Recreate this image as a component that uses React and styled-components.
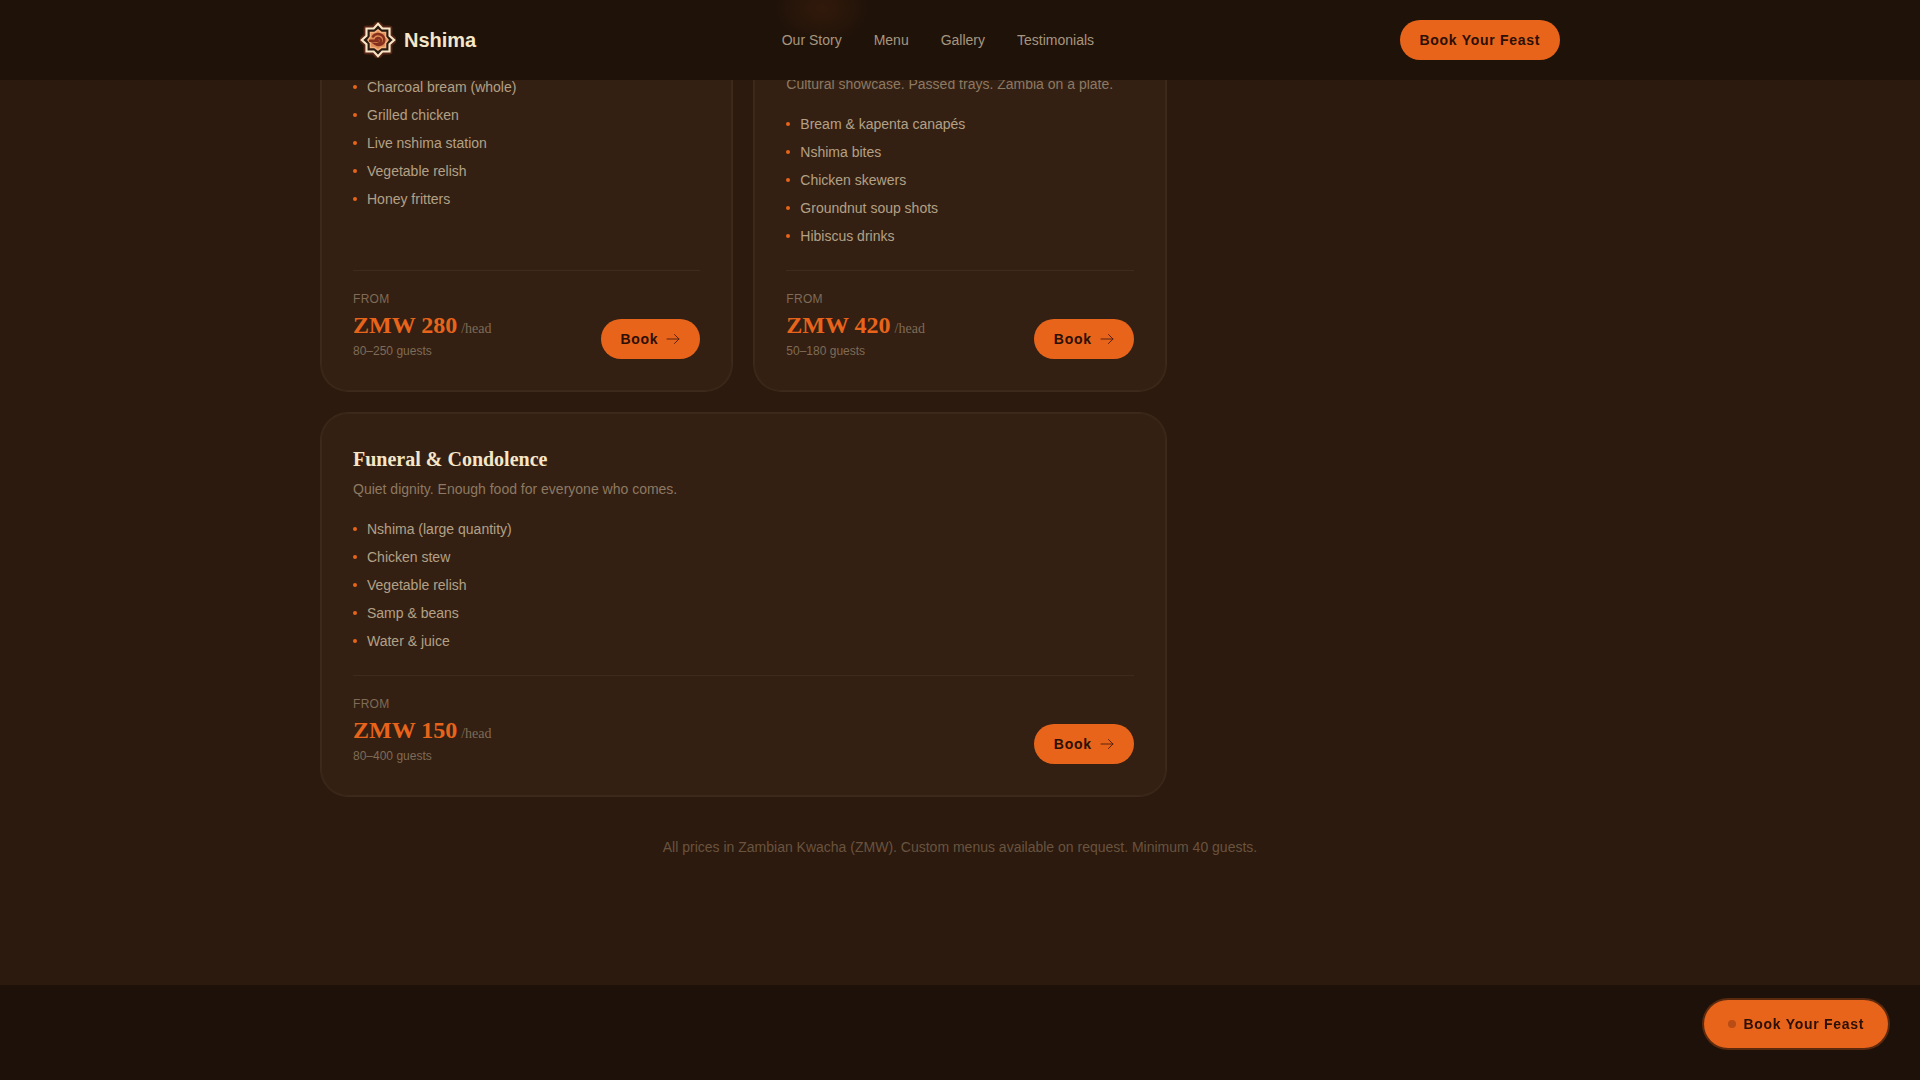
import React from 'react';
import styled, { createGlobalStyle } from 'styled-components';

const NAV_LINKS = [
  { title: 'Our Story', link: '#story' },
  { title: 'Menu', link: '#menu' },
  { title: 'Gallery', link: '#gallery' },
  { title: 'Testimonials', link: '#testimonials' },
];

const PACKAGES = [
  {
    id: 'grill',
    lead: 77,
    items: [
      'Charcoal bream (whole)',
      'Grilled chicken',
      'Live nshima station',
      'Vegetable relish',
      'Honey fritters',
    ],
    price: 'ZMW 280',
    guests: '80–250 guests',
  },
  {
    id: 'showcase',
    lead: 74,
    tagline: 'Cultural showcase. Passed trays. Zambia on a plate.',
    items: [
      'Bream & kapenta canapés',
      'Nshima bites',
      'Chicken skewers',
      'Groundnut soup shots',
      'Hibiscus drinks',
    ],
    price: 'ZMW 420',
    guests: '50–180 guests',
  },
  {
    id: 'funeral',
    wide: true,
    title: 'Funeral & Condolence',
    tagline: 'Quiet dignity. Enough food for everyone who comes.',
    items: [
      'Nshima (large quantity)',
      'Chicken stew',
      'Vegetable relish',
      'Samp & beans',
      'Water & juice',
    ],
    price: 'ZMW 150',
    guests: '80–400 guests',
  },
];

const GlobalStyle = createGlobalStyle`
  *, *::before, *::after {
    box-sizing: border-box;
  }

  body {
    margin: 0;
    background: #1d1109;
    color: #f5e6c8;
    font-family: 'Liberation Sans', Arial, sans-serif;
    font-size: 14px;
    line-height: 20px;
  }
`;

const Page = styled.div`
  display: flex;
  flex-direction: column;
  min-height: 100vh;
`;

const Header = styled.header`
  position: fixed;
  top: 0;
  left: 0;
  right: 0;
  z-index: 10;
  background:
    radial-gradient(ellipse 48px 36px at calc(50% - 138px) 8px, #31190b, #2b170a 40%, transparent),
    #1f1209;
`;

const HeaderInner = styled.div`
  display: flex;
  align-items: center;
  justify-content: space-between;
  max-width: 1280px;
  height: 80px;
  margin: 0 auto;
  padding: 0 40px;
`;

const Brand = styled.a`
  display: flex;
  align-items: center;
  gap: 8px;
  color: #f5e6c8;
  font-size: 20px;
  font-weight: 700;
  line-height: 28px;
  text-decoration: none;
`;

const Nav = styled.nav`
  display: flex;
  gap: 32px;
`;

const NavLink = styled.a`
  color: #a7967f;
  text-decoration: none;
`;

const Button = styled.button`
  display: inline-flex;
  align-items: center;
  gap: 8px;
  height: 40px;
  padding: 0 20px;
  border: 0;
  border-radius: 24px;
  background: #e8641b;
  color: #2c0f05;
  font-family: inherit;
  font-size: 14px;
  font-weight: 700;
  line-height: 20px;
  letter-spacing: 0.05em;
  white-space: nowrap;
  cursor: pointer;
`;

const FloatingButton = styled(Button)`
  position: fixed;
  right: 32px;
  bottom: 32px;
  z-index: 10;
  height: 48px;
  padding: 0 24px;
  box-shadow: 0 0 0 2px rgba(232, 100, 27, 0.3);
`;

const Dot = styled.span`
  width: 8px;
  height: 8px;
  border-radius: 50%;
  background: #b84c14;
`;

const MenuSection = styled.main`
  padding-bottom: 128px;
  background: #2c1a0e;
`;

const Inner = styled.div`
  width: 100%;
  max-width: 1280px;
  margin: 0 auto;
`;

const Cards = styled.div`
  display: grid;
  grid-template-columns: repeat(3, 1fr);
  gap: 20px;
`;

const Card = styled.article`
  display: flex;
  flex-direction: column;
  grid-column: span ${props => (props.$wide ? 2 : 1)};
  padding: 32px;
  border: 1px solid #3d2a1c;
  border-radius: 28px;
  background: #332013;
  box-shadow: inset 0 0 0 1px #3b281a;
`;

// First row continues up underneath the fixed header
const TopCard = styled(Card)`
  padding-top: ${props => props.$lead}px;
  border-top: 0;
  border-radius: 0 0 28px 28px;
`;

const CardTitle = styled.h3`
  margin: 0 0 6px;
  font-family: 'Liberation Serif', 'Times New Roman', serif;
  font-size: 20px;
  font-weight: 700;
  line-height: 28px;
`;

const Tagline = styled.p`
  margin: 0 0 20px;
  color: #8d7962;
`;

const Items = styled.ul`
  display: flex;
  flex-direction: column;
  gap: 8px;
  margin: 0 0 24px;
  padding: 0;
  list-style: none;
`;

const Item = styled.li`
  display: flex;
  align-items: center;
  gap: 10px;
  color: #b3a086;

  &::before {
    content: '';
    width: 4px;
    height: 4px;
    border-radius: 50%;
    background: #e8641b;
  }
`;

const CardFooter = styled.footer`
  display: flex;
  align-items: flex-end;
  justify-content: space-between;
  margin-top: auto;
  padding-top: 20px;
  border-top: 1px solid #3f2b1d;
`;

const Small = styled.div`
  color: #7f6b56;
  font-size: 12px;
  line-height: 16px;
`;

const FromLabel = styled(Small)`
  letter-spacing: 0.025em;
`;

const Price = styled.div`
  color: #e8641b;
  font-family: 'Liberation Serif', 'Times New Roman', serif;
  font-size: 24px;
  font-weight: 700;
  line-height: 36px;
`;

const PerHead = styled.span`
  margin-left: 4px;
  color: #7f6b56;
  font-size: 14px;
  font-weight: 400;
  line-height: 1;
`;

const Note = styled.p`
  margin: 40px 0 0;
  color: #69533f;
  text-align: center;
`;

const NextSection = styled.section`
  flex: 1;
  background: #1d1109;
`;

const STAR = 'M50 5 L62 18 H82 V38 L95 50 L82 62 V82 H62 L50 95 L38 82 H18 V62 L5 50 L18 38 V18 H38 Z';

const Logo = () => (
  <svg width="36" height="36" viewBox="0 0 100 100" aria-hidden="true">
    <path d={STAR} fill="none" stroke="#6e2c1c" strokeWidth="16" strokeLinejoin="round" opacity="0.7" />
    <path d={STAR} fill="#2a1a12" stroke="#f8e5c5" strokeWidth="6" />
    <path
      d="M50 22 L59 29 H71 V41 L78 50 L71 59 V71 H59 L50 78 L41 71 H29 V59 L22 50 L29 41 V29 H41 Z"
      fill="#e08a55"
      stroke="#f3b07a"
      strokeWidth="4"
    />
    <path
      d="M36 40 C44 29 65 32 67 47 C69 62 53 68 43 61 C54 62 61 55 57 48 C53 42 45 45 44 49 M28 52 H50"
      fill="none"
      stroke="#85301f"
      strokeWidth="7"
      strokeLinecap="round"
    />
  </svg>
);

const Arrow = () => (
  <svg width="14" height="14" viewBox="0 0 14 14" fill="none" stroke="#5a220b" aria-hidden="true">
    <path d="M1 7 H13 M8.5 2.5 L13 7 L8.5 11.5" strokeLinecap="round" strokeLinejoin="round" />
  </svg>
);

const Package = ({ data }) => {
  const Wrapper = data.lead ? TopCard : Card;

  return (
    <Wrapper $wide={data.wide} $lead={data.lead}>
      {data.title && <CardTitle>{data.title}</CardTitle>}
      {data.tagline && <Tagline>{data.tagline}</Tagline>}
      <Items>
        {data.items.map(item => (
          <Item key={item}>{item}</Item>
        ))}
      </Items>
      <CardFooter>
        <div>
          <FromLabel>FROM</FromLabel>
          <Price>
            {data.price}
            <PerHead>/head</PerHead>
          </Price>
          <Small>{data.guests}</Small>
        </div>
        <Button type="button">
          Book
          <Arrow />
        </Button>
      </CardFooter>
    </Wrapper>
  );
};

export default function App() {
  return (
    <Page>
      <GlobalStyle />
      <Header>
        <HeaderInner>
          <Brand href="#top">
            <Logo />
            Nshima
          </Brand>
          <Nav>
            {NAV_LINKS.map(link => (
              <NavLink href={link.link} key={link.title}>
                {link.title}
              </NavLink>
            ))}
          </Nav>
          <Button type="button">Book Your Feast</Button>
        </HeaderInner>
      </Header>
      <MenuSection>
        <Inner>
          <Cards>
            {PACKAGES.map(data => (
              <Package data={data} key={data.id} />
            ))}
          </Cards>
          <Note>
            All prices in Zambian Kwacha (ZMW). Custom menus available on request. Minimum 40 guests.
          </Note>
        </Inner>
      </MenuSection>
      <NextSection />
      <FloatingButton type="button">
        <Dot />
        Book Your Feast
      </FloatingButton>
    </Page>
  );
}
